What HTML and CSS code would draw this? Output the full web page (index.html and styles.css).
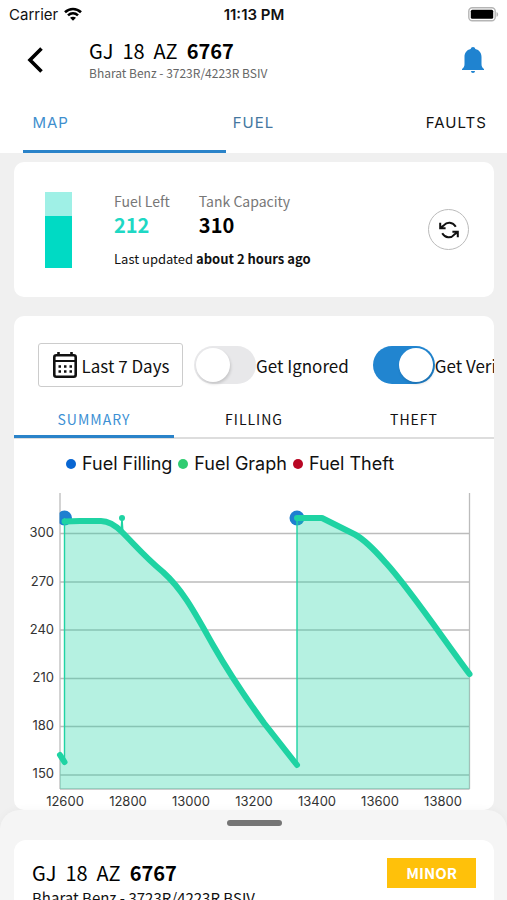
FILE: index.html
```html
<!DOCTYPE html>
<html lang="en">
<head>
<meta charset="utf-8">
<meta name="viewport" content="width=device-width, initial-scale=1">
<title>Vehicle fuel</title>
<link rel="stylesheet" href="styles.css">
</head>
<body>
<header class="top">
  <div class="status">
    <span class="carrier">Carrier
      <svg width="18" height="14" viewBox="0 0 18 14" fill="none" stroke="#000" stroke-width="2.6" aria-hidden="true"><path d="M1 5.2C5.6.9 12.4.9 17 5.2M4 8.4c3-2.7 7-2.7 10 0"/><path d="M6 10.8c1.800-1.500 4.200-1.500 6 0L9 13.800z" fill="#000" stroke="none"/></svg>
    </span>
    <strong class="clock">11:13 PM</strong>
    <span class="battery">
      <svg width="31" height="15" viewBox="0 0 31 15" aria-hidden="true"><rect x=".8" y=".8" width="26.400" height="13" rx="3.500" fill="#fff" stroke="#b5b5b5" stroke-width="1.400"/><rect x="2.800" y="2.800" width="22.400" height="9" rx="1.500"/><path d="M28.500 5c2.200.8 2.200 4 0 4.800z" fill="#b5b5b5"/></svg>
    </span>
  </div>
  <div class="titlebar">
    <button class="icon-btn back" aria-label="Back"><svg width="17" height="26" viewBox="0 0 17 26" fill="none" stroke="#000" stroke-width="3.600"><path d="M14.500 1.500 3 13l11.500 11.500"/></svg></button>
    <div class="vehicle">
      <h1 class="plate">GJ&nbsp; 18&nbsp; AZ&nbsp; <b>6767</b></h1>
      <p class="model">Bharat Benz - 3723R/4223R BSIV</p>
    </div>
    <button class="icon-btn" aria-label="Notifications"><svg width="22" height="26" viewBox="0 0 22 26" fill="#1f83d0"><path d="M11 0c1.300 0 2.100.8 2.300 2C17.500 3 19.500 6 19.500 10v7c0 2 .6 3.600 2.500 5v1H0v-1c1.900-1.400 2.500-3 2.500-5v-7C2.500 6 4.500 3 8.700 2 8.900.8 9.700 0 11 0zM9 24h4c0 1.300-.8 2-2 2s-2-.7-2-2z"/></svg></button>
  </div>
  <nav class="tabs">
    <a class="map" href="#map">MAP</a><a class="fuel" href="#fuel">FUEL</a><a href="#faults">FAULTS</a>
  </nav>
  <div class="tab-line"></div>
</header>
<main class="content">
  <section class="card fuel-card">
    <div class="gauge"><div class="gauge-fill"></div></div>
    <div class="readings">
      <dl class="stats">
        <div><dt>Fuel Left</dt><dd class="left">212</dd></div>
        <div><dt>Tank Capacity</dt><dd>310</dd></div>
      </dl>
      <p class="updated">Last updated <b>about 2 hours ago</b></p>
    </div>
    <button class="refresh" aria-label="Refresh"><svg width="20" height="18" viewBox="0 0 20 18" fill="none" stroke="#111" stroke-width="2"><path d="M1.200 1.800v5.400h5.400M1.700 6.600 5 4.200C8 .6 13.600.6 16.800 5.800M18.800 16.200v-5.400h-5.400M18.300 11.400 15 13.800c-3 3.600-8.600 3.600-11.800-1.600"/></svg></button>
  </section>
  <section class="card chart-card">
    <div class="filters">
      <button class="range"><svg width="26" height="28" viewBox="0 0 26 28" fill="none" stroke="#111" stroke-width="2.600"><rect x="2.300" y="4.300" width="21.400" height="21.400" rx="2"/><path d="M2 10h22" stroke-width="2"/><path d="M6.500 1v4M19.500 1v4"/><path d="M6.500 15.500h13.500M6.500 20.500h13.500" stroke-dasharray="2.500 3"/></svg>Last 7 Days</button>
      <label class="toggle"><input type="checkbox">Get Ignored</label>
      <label class="toggle"><input type="checkbox" checked>Get Verified</label>
    </div>
    <nav class="subtabs">
      <a class="on" href="#summary">SUMMARY</a><a href="#filling">FILLING</a><a href="#theft">THEFT</a>
    </nav>
    <ul class="legend">
      <li class="c-fill">Fuel Filling</li><li class="c-graph">Fuel Graph</li><li class="c-theft">Fuel Theft</li>
    </ul>
    <svg class="chart" viewBox="0 0 480 330" role="img" aria-label="Fuel level by distance">
      <defs><clipPath id="plot"><rect x="45.500" y="0" width="420" height="309"/></clipPath></defs>
      <g stroke="#bcbcbc" stroke-width="1.300"><path d="M46 53.500H455.500M46 102H455.500M46 150H455.500M46 198.500H455.500M46 246.500H455.500M46 295H455.500M46 309H455.500"/><path d="M46 13V309M455.500 13V309"/></g>
      <g clip-path="url(#plot)" fill="#1f7fd0"><circle cx="50.500" cy="38" r="7.500"/><circle cx="283" cy="38" r="7.500"/></g>
      <path fill="#1fd3a3" fill-opacity=".33" d="M46 275 50.500 282V41L66 41H87Q97 41 108 52C121 65 131 77 149 92C169 110 181 133 199 165C211 186 231 217 250 243L283 285V38H308L341 54.500C353 61 364 74 372 83C395 108 430 160 455.500 194V309H46z"/>
      <path fill="none" stroke="#1fd3a3" stroke-width="1.400" d="M50.500 282V38M283 285V38M107 51 108 38 109 53"/>
      <g fill="none" stroke="#1fd3a3" stroke-width="6" stroke-linecap="round" stroke-linejoin="round"><path d="M46 275 50.500 282M50.500 41.500 66 41H87Q97 41 108 52C121 65 131 77 149 92C169 110 181 133 199 165C211 186 231 217 250 243L283 285M283 38H308L341 54.500C353 61 364 74 372 83C395 108 430 160 455.500 194"/></g>
      <circle cx="108" cy="38" r="3" fill="#1fd3a3"/>
      <g class="axis" text-anchor="end"><text x="40" y="57">300</text><text x="40" y="106">270</text><text x="40" y="154">240</text><text x="40" y="202">210</text><text x="40" y="250">180</text><text x="40" y="298">150</text></g>
      <g class="axis" text-anchor="middle"><text x="51" y="326">12600</text><text x="114" y="326">12800</text><text x="177" y="326">13000</text><text x="240" y="326">13200</text><text x="303" y="326">13400</text><text x="366" y="326">13600</text><text x="429" y="326">13800</text></g>
    </svg>
  </section>
</main>
<aside class="sheet">
  <div class="handle"></div>
  <div class="sheet-card">
    <div>
      <h2 class="plate">GJ&nbsp; 18&nbsp; AZ&nbsp; <b>6767</b></h2>
      <p class="sheet-model">Bharat Benz - 3723R/4223R BSIV</p>
    </div>
    <span class="badge">MINOR</span>
  </div>
</aside>
</body>
</html>
```
FILE: styles.css
```css
* { box-sizing: border-box; }
body {
  margin: 0;
  height: 100vh;
  overflow: hidden;
  background: #f0f0f0;
  color: #111;
  font-family: "Noto Sans CJK SC", sans-serif;
}
h1, h2, p, dl, dd, ul { margin: 0; padding: 0; }
a { color: inherit; text-decoration: none; }
button { font: inherit; color: inherit; padding: 0; background: none; border: 0; }

.top { background: #fff; overflow: hidden; }
.status {
  display: grid;
  grid-template-columns: 1fr auto 1fr;
  align-items: center;
  height: 28px;
  padding: 0 8px 0 9px;
  font-family: Inter, sans-serif;
  font-size: 15px;
}
.carrier { display: flex; align-items: center; gap: 6px; }
.clock { font-weight: 600; }
.battery { display: flex; justify-content: flex-end; }

.titlebar { display: flex; align-items: center; height: 64px; padding: 0 23px 0 27px; }
.icon-btn { display: flex; }
.back { width: 62px; }
.vehicle { flex: 1; }
.plate { font-size: 20px; line-height: 26px; font-weight: 400; color: #000; white-space: nowrap; }
.model { font-size: 12px; line-height: 18px; color: #666; }

/* The tab strip is wider than the screen, so the outer tabs sit near its edges. */
.tabs {
  display: grid;
  grid-template-columns: repeat(3, 1fr);
  margin: 0 -10%;
  padding: 20px 0 26px;
  text-align: center;
  font-family: Inter, sans-serif;
  font-size: 15px;
  line-height: 22px;
  letter-spacing: 1px;
}
.tabs .map { color: #3f8fce; }
.tabs .fuel { color: #44779f; }
.tab-line { width: 40%; height: 3px; margin: -10px 0 0 23px; background: #2a83c9; }

.content { padding: 9px 13px 9px 14px; }
.card { background: #fff; border-radius: 10px; overflow: hidden; }
.fuel-card { display: flex; align-items: center; height: 135px; padding: 0 25px 0 31px; }
.gauge { display: flex; align-items: flex-end; width: 27px; height: 76px; background: #9ff0e6; }
.gauge-fill { width: 100%; height: 68%; background: #00dac4; }
.readings { flex: 1; padding-left: 42px; }
.stats { display: flex; gap: 29px; }
dt { font-size: 14px; line-height: 20px; color: #777; }
dd { font-size: 20px; line-height: 28px; font-weight: 700; color: #000; }
.left { color: #1ed8c4; }
.updated { margin-top: 10px; font-size: 13px; line-height: 20px; }
.refresh {
  display: flex;
  align-items: center;
  justify-content: center;
  width: 41px;
  height: 41px;
  border: 1px solid #bbb;
  border-radius: 50%;
}

.chart-card { margin-top: 19px; }
.filters { display: flex; align-items: center; padding: 27px 0 15px 24px; font-size: 17px; white-space: nowrap; }
.range {
  display: flex;
  flex: none;
  align-items: center;
  justify-content: center;
  gap: 4px;
  width: 145px;
  height: 44px;
  margin-right: 11px;
  border: 1px solid #ccc;
  border-radius: 3px;
}
.toggle { display: flex; flex: none; align-items: center; margin-right: 24px; }
.toggle input {
  appearance: none;
  width: 62px;
  height: 38px;
  margin: 0;
  padding: 2px;
  display: flex;
  border-radius: 19px;
  background: #e8e8ea;
}
.toggle input::before {
  content: "";
  width: 34px;
  height: 34px;
  border-radius: 50%;
  background: #fff;
  box-shadow: 1px 2px 3px rgba(0, 0, 0, .15);
}
.toggle input:checked { background: #2185d0; justify-content: flex-end; }

.subtabs {
  display: grid;
  grid-template-columns: repeat(3, 1fr);
  text-align: center;
  font-size: 14px;
  line-height: 34px;
  letter-spacing: 1px;
  border-bottom: 2px solid #ddd;
}
.subtabs a { height: 36px; margin-bottom: -1px; }
.subtabs .on { color: #3c90d4; border-bottom: 3px solid #2a83c9; }

.legend { display: flex; gap: 6px; padding: 13px 0 4px 52px; list-style: none; font-family: Inter, sans-serif; font-size: 18px; line-height: 24px; }
.legend li { display: flex; align-items: center; gap: 6px; white-space: nowrap; }
.legend li::before { content: ""; width: 10px; height: 10px; border-radius: 50%; background: currentColor; }
.legend .c-fill::before { background: #0866d2; }
.legend .c-graph::before { background: #2fcc71; }
.legend .c-theft::before { background: #b90724; }
.chart { display: block; width: 100%; }
.axis { font-family: Inter, sans-serif; font-size: 13px; fill: #333; }

.sheet {
  position: fixed;
  left: 0;
  right: 0;
  bottom: 0;
  height: 90px;
  padding: 10px 13px 0 14px;
  overflow: hidden;
  border-radius: 20px 20px 0 0;
  background: #f5f5f5;
  box-shadow: 0 0 8px rgba(0, 0, 0, .04);
}
.handle { width: 55px; height: 6px; margin: 0 auto 14px; border-radius: 3px; background: #757575; }
.sheet-card {
  display: flex;
  justify-content: space-between;
  align-items: flex-start;
  padding: 18px 18px 20px;
  border-radius: 12px;
  background: #fff;
}
.sheet-card .plate { line-height: 30px; }
.sheet-model { font-size: 15px; line-height: 20px; }
.badge { padding: 0 19px; background: #ffc10a; color: #fff; font-size: 15px; line-height: 30px; font-weight: 700; }
```
